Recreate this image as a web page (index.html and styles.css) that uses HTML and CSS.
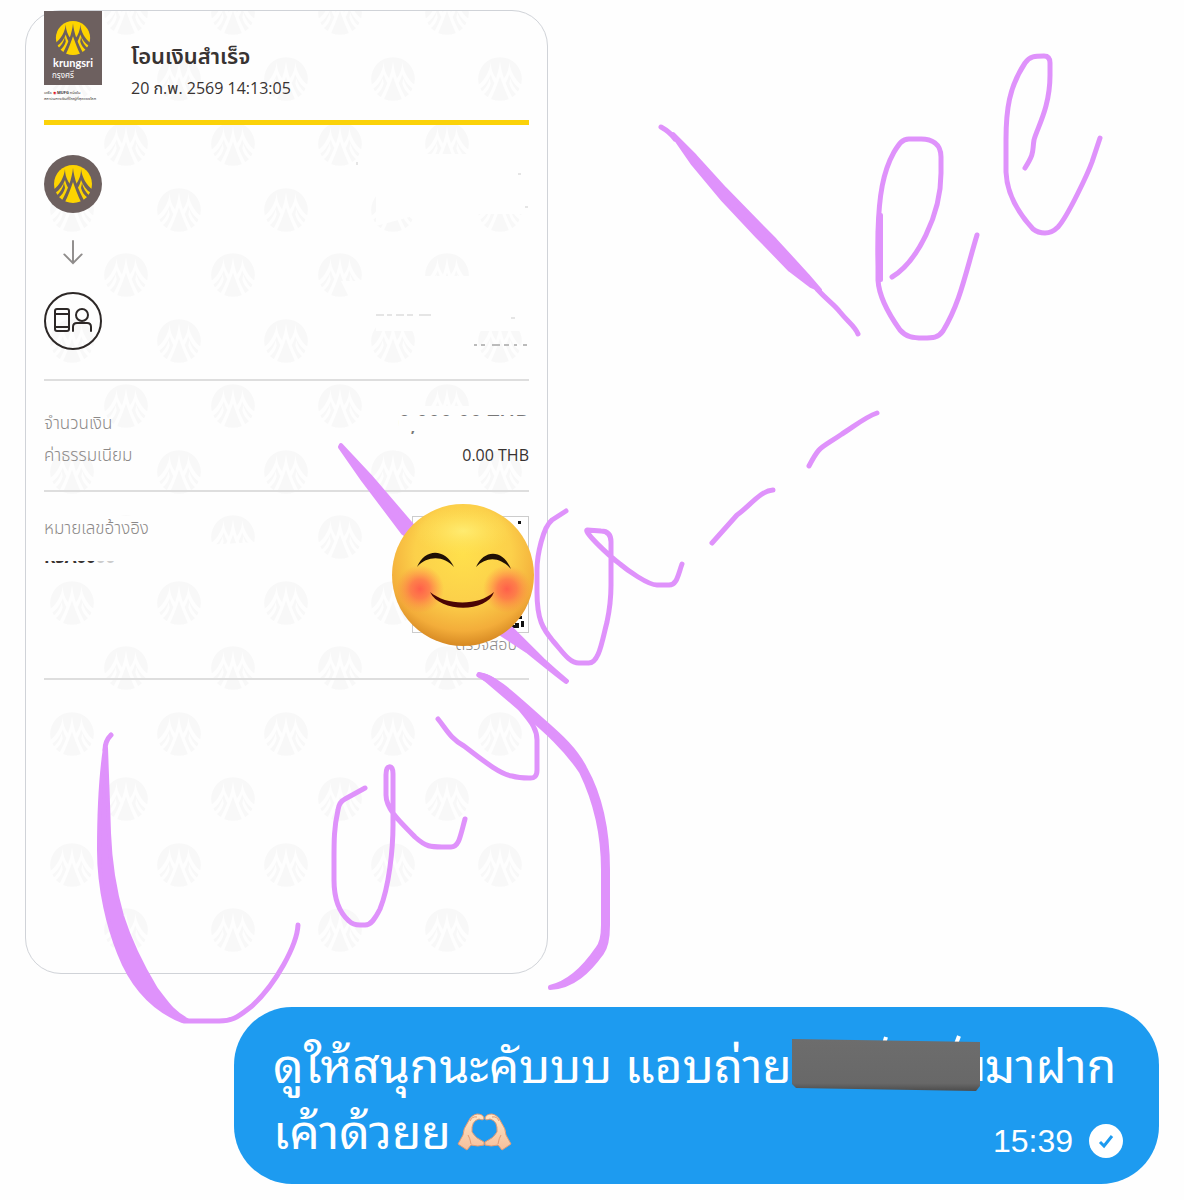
FILE: index.html
```html
<!DOCTYPE html>
<html lang="th">
<head>
<meta charset="utf-8">
<meta name="viewport" content="width=device-width, initial-scale=1">
<title>Chat</title>
<link rel="stylesheet" href="styles.css">
</head>
<body>
<svg class="defs" aria-hidden="true">
  <defs>
    <g id="emblem" stroke-linecap="round" fill="none">
      <circle r="19" fill="var(--ink)"/>
      <g fill="var(--ground)">
        <path d="M0-16C-1-6-5 6-12 18L-8 18C-5 12-2 4 0-2C2 4 5 12 8 18L12 18C5 6 1-6 0-16Z"/>
        <path d="M-8-15C-9-7-13 1-20 6L-18 9C-13 6-10 1-8-4C-7 0-6 2-4 5L-2 1C-6-3-8-9-8-15Z"/>
        <path d="M8-15C9-7 13 1 20 6L18 9C13 6 10 1 8-4C7 0 6 2 4 5L2 1C6-3 8-9 8-15Z"/>
        <path d="M-9-1C-10 4-13 9-17 12L-15 14C-11 11-9 8-8 4ZM9-1C10 4 13 9 17 12L15 14C11 11 9 8 8 4Z"/>
      </g>
    </g>
    <pattern id="watermark" class="watermark" width="107" height="131" patternUnits="userSpaceOnUse" patternTransform="translate(46 68)">
      <use href="#emblem" transform="translate(54 65) scale(1.15)"/>
      <use href="#emblem" transform="scale(1.15)"/>
      <use href="#emblem" transform="translate(107 0) scale(1.15)"/>
      <use href="#emblem" transform="translate(0 131) scale(1.15)"/>
      <use href="#emblem" transform="translate(107 131) scale(1.15)"/>
    </pattern>
    <radialGradient id="face" cx=".5" cy=".35" r=".68">
      <stop offset="0" stop-color="#ffe04c"/><stop offset=".5" stop-color="#fcd04a"/>
      <stop offset=".8" stop-color="#f3ad3a"/><stop offset="1" stop-color="#cf7f1c"/>
    </radialGradient>
    <radialGradient id="blush">
      <stop offset="0" stop-color="#ff5f4b"/><stop offset=".4" stop-color="#ff6d4b" stop-opacity=".8"/>
      <stop offset="1" stop-color="#ff8a45" stop-opacity="0"/>
    </radialGradient>
    <radialGradient id="shine">
      <stop offset="0" stop-color="#fff07a" stop-opacity=".8"/><stop offset="1" stop-color="#ffe45c" stop-opacity="0"/>
    </radialGradient>
    <linearGradient id="bar" x2="0" y2="1">
      <stop offset="0" stop-color="#6d6d6d"/><stop offset=".85" stop-color="#686868"/><stop offset="1" stop-color="#4c4c4c"/>
    </linearGradient>
    <linearGradient id="skin" x2="0" y2="1">
      <stop offset="0" stop-color="#ffe6c6"/><stop offset="1" stop-color="#f6bf9b"/>
    </linearGradient>
  </defs>
</svg>

<main class="chat">
  <article class="slip">
    <svg class="slip-mark" aria-hidden="true">
      <rect x="20" width="480" height="963" fill="url(#watermark)"/>
      <g fill="#fefefe">
        <path d="M350 143H521V203H350ZM350 203H395L350 215ZM350 285H521V320H350ZM315 270H345V300H330ZM390 265H450V300H390ZM370 395H504V440H370ZM60 505H160V548H60ZM160 535L250 530V560H160Z"/>
      </g>
    </svg>

    <header class="slip-head">
      <div class="brand">
        <div class="brand-box">
          <svg class="brand-emblem" viewBox="-20 -20 40 40" aria-hidden="true"><use href="#emblem"/></svg>
          <span class="brand-name">krungsri</span>
          <span class="brand-thai">กรุงศรี</span>
        </div>
        <p class="brand-note">เครือ <span class="mufg">◉</span> <b>MUFG</b> หนึ่งใน<br>สถาบันการเงินที่ใหญ่ที่สุดของโลก</p>
      </div>
      <div class="slip-title">
        <h1>โอนเงินสำเร็จ</h1>
        <time>20 ก.พ. 2569 14:13:05</time>
      </div>
    </header>

    <section class="route">
      <svg class="route-badge bank" viewBox="-29 -29 58 58" role="img" aria-label="krungsri"><circle r="29" fill="#6d605f"/><use href="#emblem"/></svg>
      <svg class="route-arrow" viewBox="0 0 22 28" aria-hidden="true"><path d="M11 2V25M2 16l9 9 9-9"/></svg>
      <svg class="route-badge" viewBox="-29 -29 58 58" aria-hidden="true">
        <g fill="none" stroke="#2d2827" stroke-width="2" stroke-linecap="round">
          <circle r="28"/><rect x="-18" y="-12" width="14" height="22" rx="2"/><path d="M-18-7H-4M-18 6H-4"/>
          <circle cx="9" cy="-6" r="6"/><path d="M0 10V6Q0 2 4 2H14Q18 2 18 6V10"/>
        </g>
      </svg>
      <svg class="remains" viewBox="0 0 200 200" aria-hidden="true">
        <path d="M28 10v3M189 22h3M196 55h3M47 163h8M58 163h5M67 163h8M78 163h6M90 163h12M182 166h4" stroke="#ccc"/>
        <path d="M145 193h3M152 193h4M163 193h8M175 193h5M185 193h3M194 193h4" stroke="#bbb" stroke-width="2"/>
      </svg>
    </section>

    <dl class="amounts">
      <div><dt>จำนวนเงิน</dt><dd class="amount-hidden">0,000.00 THB</dd></div>
      <div><dt>ค่าธรรมเนียม</dt><dd>0.00 THB</dd></div>
    </dl>

    <section class="reference">
      <div class="reference-text">
        <h2>หมายเลขอ้างอิง</h2>
        <p class="reference-code">KSA00<span>00</span></p>
      </div>
      <div class="check">
        <svg class="qr" viewBox="0 0 117 117" aria-hidden="true">
          <rect x=".5" y=".5" width="116" height="116" fill="#fff" stroke="#ccc"/>
          <path d="M5 5h6v3H5zM106 5h3v3h-3zM99 103h4v3h-4zM104 100h6v3h-6zM103 107h4v5h-8v-3h4zM109 105h3v6h-3z" fill="#111"/>
        </svg>
        <p>ตรวจสอบ</p>
      </div>
    </section>
  </article>

  <section class="bubble">
    <p class="message">ดูให้สนุกนะคับบบ แอบถ่าย<svg class="covered" viewBox="0 0 197 60" aria-hidden="true">
        <path d="M96 9l2-7M168 9l3-8" stroke="#fff" stroke-width="4"/><path d="M193 22v24" stroke="#fff" stroke-width="3"/>
        <path d="M4 4L192 7V51L188 56L8 53L4 49Z" fill="url(#bar)"/>
      </svg>มาฝาก<br>เค้าด้วยย<svg class="hands" viewBox="0 0 56 38" role="img" aria-label="heart hands">
        <g id="hand" stroke="#e39a72" stroke-width="1" stroke-linejoin="round">
          <path d="M1 31L10 37L14 32Q21 34 27 32L27 29Q18 25 15 19Q14 8 22 6Q27 8 27 5Q26 1 20 1Q14 2 11 9Q6 16 6 22Z" fill="url(#skin)"/>
          <path d="M13 8Q15 3 20 4M14 31Q13 25 11 22" fill="none"/>
        </g>
        <use href="#hand" transform="matrix(-1 0 0 1 55 0)"/>
      </svg></p>
    <footer class="stamp"><time>15:39</time>
      <svg viewBox="0 0 34 34" role="img" aria-label="Sent"><circle cx="17" cy="17" r="17" fill="#fff"/><path d="M11 18l4 4 8-10" fill="none" stroke="#1d9bf0" stroke-width="3"/></svg>
    </footer>
  </section>

  <svg class="ink" width="1184" height="1200" viewBox="0 0 1184 1200" aria-hidden="true">
    <g class="stroke">
      <path d="M661 127Q670 132 675 139M817 289C829 302 834 304 840 312C848 322 855 326 858 334"/>
      <path d="M892 277C917 262 941 215 941 173V157C941 143 931 139 921 139H909C902 139 899 144 894 152C883 172 879 195 878 232V280C879 298 890 316 900 330C906 337 913 338 923 338S938 338 943 331C960 303 965 275 977 235"/>
      <path d="M1025 168C1035 152 1032 152 1034 140C1037 128 1050 108 1050 75V63Q1050 56 1044 56C1035 56 1030 56 1025 63C1009 87 1006 110 1006 140V172C1007 196 1020 215 1033 229Q1038 233 1045 233T1058 227C1068 216 1088 173 1092 162L1100 138"/>
      <path d="M877 413C865 417 852 428 842 434C820 449 820 445 809 466M773 490C760 491 750 506 737 515L712 543"/>
      <path d="M566 511L552 520C543 527 537 555 537 570V592C537 620 543 629 553 641C562 651 569 663 579 663H588C599 664 602 641 607 622C610 608 611 600 611 585V542Q611 531 601 531L587 530C584 532 608 555 620 564C627 570 648 585 657 585H669C677 585 678 575 682 564"/>
      <path d="M438 719C447 730 450 738 464 746C480 758 499 774 512 776Q519 778 529 778Q537 779 537 770V740C537 724 524 716 517 703C508 690 488 681 479 675"/>
      <path d="M479 675C494 676 504 690 517 701"/>
      <path d="M111 735Q105 741 105 750M184 1021H216C234 1022 240 1015 252 1006C276 984 297 945 298 925"/>
      <path d="M365 788L345 799Q339 802 338 810C334 828 334 839 334 862V880C334 901 341 914 349 921Q353 925 360 925H365C371 925 375 919 380 909C389 887 393 849 393 825V774Q393 766 389 767Q386 767 386 775V795C386 811 405 826 415 837C426 847 431 847 442 847H451C459 847 460 837 465 819"/>
    </g>
    <g class="brush">
      <path d="M673 134L695 156L725 189L775 240L808 276L820 290L811 286L790 270L757 236L723 200L693 164L675 138Z"/>
      <path d="M879 215C877 240 877 260 879 280L881 280V215Z"/>
      <path d="M341 445L370 476L412 525L440 560L403 533L363 480L340 447ZM500 617L543 660Q555 671 567 681L566 682Q554 673 527 651L498 632Z"/>
      <path d="M105 748C101 775 99 808 99 850C99 890 109 928 119 953C131 984 150 1008 182 1021L187 1020C172 1012 167 1003 156 989C141 964 129 938 122 916C113 885 110 860 109 833C108 803 107 770 106 748Z"/>
      <path d="M479 674C497 677 518 699 540 718C563 738 576 750 585 768C603 800 608 835 608 870V925Q608 945 602 953C589 971 573 987 550 988L550 987C568 983 584 968 597 949Q603 942 603 925V870C603 840 597 805 581 772C562 743 537 724 512 702Z"/>
    </g>
    <g transform="translate(463 575)">
      <ellipse rx="71" ry="71" fill="url(#face)"/>
      <ellipse cy="-44" rx="50" ry="24" fill="url(#shine)"/>
      <circle cx="-43" cy="14" r="24" fill="url(#blush)"/><circle cx="44" cy="14" r="24" fill="url(#blush)"/>
      <path d="M-46-8C-38-27-18-27-9-8C-19-19-35-20-46-8ZM13-8C21-26 40-26 48-6C37-18 24-19 13-8Z" fill="#201005"/>
      <path d="M-33 17C-16 31 15 31 31 17C24 38-23 38-33 17Z" fill="#4a0505"/>
    </g>
  </svg>
</main>
</body>
</html>
```
FILE: styles.css
```css
* { box-sizing: border-box; }

body {
  margin: 0;
  background: #fefefe;
  font-family: "Open Sans", "Noto Sans Thai", "Noto Sans", sans-serif;
  color: #383332;
}

h1, h2, p, dl, dd { margin: 0; }

.defs { position: absolute; width: 0; height: 0; }

.chat {
  position: relative;
  display: flex;
  flex-direction: column;
  gap: 33px;
  padding: 10px 25px 16px;
  overflow: hidden;
}

.ink { position: absolute; top: 0; left: 0; pointer-events: none; }
.stroke { fill: none; stroke: #df92fb; stroke-width: 5; stroke-linecap: round; stroke-linejoin: round; }
.brush { fill: #df92fb; stroke: #df92fb; stroke-width: 4; stroke-linejoin: round; }

/* Transfer slip */
.slip {
  position: relative;
  width: 100%;
  max-width: 523px;
  padding: 0 18px 293px;
  border: 1px solid #d0d3d8;
  border-radius: 36px;
}

.slip > * { position: relative; }

.slip > .slip-mark {
  position: absolute;
  inset: 0;
  width: 100%;
  height: 100%;
  border-radius: 36px;
}

.watermark { --ink: #f8f8f8; --ground: #fefefe; }

.slip-head {
  display: flex;
  gap: 29px;
  height: 114px;
  border-bottom: 5px solid #fbd209;
}

.brand { width: 58px; }

.brand-box {
  display: flex;
  flex-direction: column;
  align-items: center;
  height: 74px;
  padding-top: 9px;
  background: #6d605f;
  color: #fff;
}

.brand-emblem { width: 36px; height: 36px; }
.brand-emblem, .bank { --ink: #fdd400; --ground: #6d605f; }
.brand-name { font: 700 11px/14px Lato, sans-serif; }
.brand-thai { align-self: flex-start; padding-left: 8px; font-size: 8px; line-height: 10px; }
.brand-note { padding-top: 5px; font-size: 4px; line-height: 6px; white-space: nowrap; }
.mufg { color: #e01020; }

.slip-title { padding-top: 26px; }
.slip-title h1 { font-size: 22px; line-height: 36px; font-weight: 600; }
.slip-title time { display: block; font-size: 16px; line-height: 30px; }

.route {
  position: relative;
  display: flex;
  flex-direction: column;
  align-items: flex-start;
  gap: 26px;
  padding: 30px 0 29px;
  border-bottom: 2px solid #dedede;
}

.route-badge { display: block; width: 58px; height: 58px; }
.route-arrow { width: 22px; height: 27px; margin-left: 18px; fill: none; stroke: #8f8c8b; stroke-width: 2; stroke-linecap: round; }
.remains { position: absolute; right: 0; top: 27px; width: 200px; height: 200px; }

.amounts {
  padding: 26px 0 19px;
  border-bottom: 2px solid #dedede;
  font-size: 16px;
  line-height: 32px;
}

.amounts div { display: flex; justify-content: space-between; }
.amounts dt, .reference h2, .check p { color: #8c8988; font-size: 17px; font-weight: 300; }
.amounts .amount-hidden { position: relative; font-size: 21px; font-weight: 600; color: #777; }
.amount-hidden::after { content: ""; position: absolute; inset: 9px 0 8px; background: #fefefe; }

.reference {
  display: flex;
  justify-content: space-between;
  height: 188px;
  padding-top: 24px;
  border-bottom: 2px solid #dedede;
}

.reference h2 { line-height: 24px; }
.reference-code { position: relative; margin-top: 5px; font-size: 17px; line-height: 24px; font-weight: 700; }
.reference-code span { color: #ccc; }
.reference-code::after { content: ""; position: absolute; inset: 0 0 auto; height: 16px; background: #fefefe; }
.qr { display: block; width: 117px; height: 117px; }
.check p { padding-right: 12px; font-size: 16px; line-height: 22px; text-align: right; }

/* Sent message */
.bubble {
  display: grid;
  align-self: flex-end;
  width: 100%;
  max-width: 925px;
  padding: 22px 36px 23px 39px;
  border-radius: 58px;
  background: #1d9bf0;
  color: #fff;
}

.message, .stamp { grid-area: 1 / 1; }

.message {
  font-family: "Noto Sans Thai Looped", "Noto Looped Thai", Loma, sans-serif;
  font-size: 48px;
  line-height: 66px;
}

.covered { width: 197px; height: 60px; margin-left: -4px; vertical-align: -12px; }
.hands { width: 56px; height: 38px; margin-left: 6px; vertical-align: -2px; }

.stamp {
  display: flex;
  align-items: center;
  align-self: end;
  justify-self: end;
  gap: 16px;
  font: 32px/40px "Liberation Sans", sans-serif;
}

.stamp svg { width: 34px; height: 34px; }
```
